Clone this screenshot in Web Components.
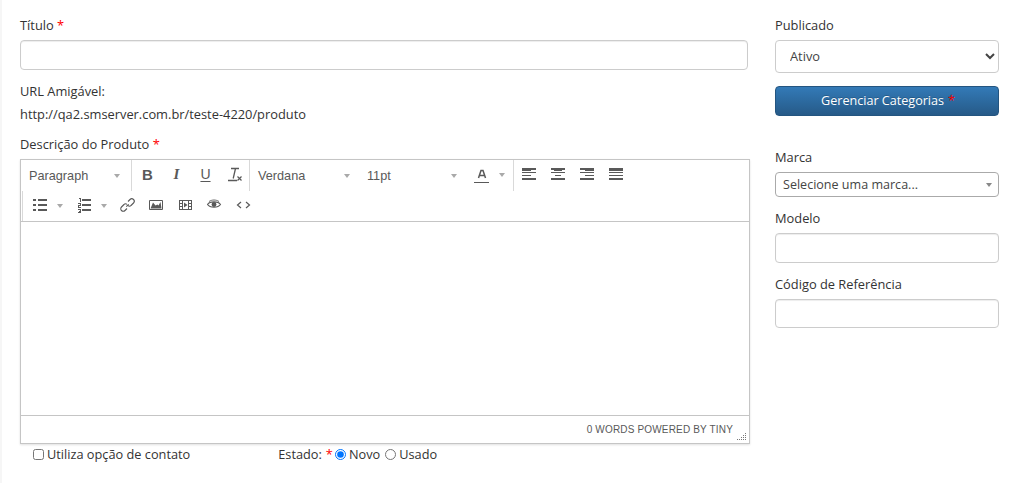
<!DOCTYPE html>
<html lang="pt-BR">
<head>
<meta charset="utf-8">
<title>Produto</title>
<style>
  html, body { margin: 0; background: #fff; }
  body { font: 12.85px "Open Sans", sans-serif; color: #333; }
</style>
</head>
<body>
<product-form></product-form>

<script>
// Label with optional red asterisk, field goes in the slot
class formField extends HTMLElement {
  constructor() {
    super();
    this.attachShadow({ mode: "open" });
    const req = this.hasAttribute("required") ? ' <span>*</span>' : "";
    this.shadowRoot.innerHTML = `
      <style>
        :host { display: flex; flex-direction: column; gap: 6px; }
        label { display: block; height: 18px; line-height: 18px; }
        span { color: #f00; }
      </style>
      <label>${this.getAttribute("label")}${req}</label>
      <slot></slot>`;
  }
}

class textInput extends HTMLElement {
  constructor() {
    super();
    this.attachShadow({ mode: "open" });
    const h = this.getAttribute("h") || 30;
    this.shadowRoot.innerHTML = `
      <style>
        :host { display: block; }
        input {
          display: block; box-sizing: border-box; width: 100%; height: ${h}px;
          border: 1px solid #ccc; border-radius: 4px; background: #fff; padding: 6px 12px;
          box-shadow: inset 0 1px 1px rgba(0,0,0,.075); outline: none;
          font: 13px "Open Sans", sans-serif;
        }
      </style>
      <input type="text">`;
  }
}

class selectBox extends HTMLElement {
  constructor() {
    super();
    this.attachShadow({ mode: "open" });
    this.shadowRoot.innerHTML = `
      <style>
        :host { display: block; }
        select {
          display: block; box-sizing: border-box; width: 100%; height: 33px;
          border: 1px solid #ccc; border-radius: 4px; background: #fff; padding: 0 10px 2px;
          font: 12.85px "Open Sans", sans-serif; color: #444; outline: none;
        }
      </style>
      <select><option>Ativo</option></select>`;
  }
}

// select2 style closed box
class brandSelect extends HTMLElement {
  constructor() {
    super();
    this.attachShadow({ mode: "open" });
    this.shadowRoot.innerHTML = `
      <style>
        :host {
          display: flex; align-items: center; justify-content: space-between; box-sizing: border-box;
          height: 25px; border: 1px solid #aaa; border-radius: 4px; background: #fff;
          padding: 0 6px 0 7px; color: #444; font-size: 12.55px;
        }
        i { width: 0; height: 0; border: 3.5px solid transparent; border-top: 4px solid #888; border-bottom: 0; }
      </style>
      <slot></slot><i></i>`;
  }
}

class primaryButton extends HTMLElement {
  constructor() {
    super();
    this.attachShadow({ mode: "open" });
    this.shadowRoot.innerHTML = `
      <style>
        :host {
          display: flex; align-items: center; justify-content: center; box-sizing: border-box;
          height: 30px; border: 1px solid #245580; border-radius: 4px; color: #fff; padding: 0 0 2px 2px;
          background: linear-gradient(to bottom, #337ab7 0, #265a88 100%);
          text-shadow: 0 -1px 0 rgba(0,0,0,.2); font-size: 12.6px;
        }
        span { color: #f00; margin-left: 4px; }
      </style>
      <slot></slot><span>*</span>`;
  }
}

// Editor pieces
class toolBtn extends HTMLElement {
  constructor() {
    super();
    this.attachShadow({ mode: "open" });
    const w = this.getAttribute("w") || 29;
    const arrow = this.hasAttribute("arrow") ? "<i></i>" : "";
    this.shadowRoot.innerHTML = `
      <style>
        :host {
          display: flex; align-items: center; box-sizing: border-box; width: ${w}px; height: 29px;
          justify-content: ${arrow ? "flex-start" : "center"}; color: #595959;
        }
        :host([arrow]) { padding-left: var(--pad, 8px); }
        i {
          flex: none; width: 0; height: 0; margin-left: var(--gap, 7px); margin-top: 1px;
          border: 3.5px solid transparent; border-top: 4px solid #a9a9a9; border-bottom: 0;
        }
        ::slotted(svg) { display: block; flex: none; }
      </style>
      <slot></slot>${arrow}`;
  }
}

class listBox extends HTMLElement {
  constructor() {
    super();
    this.attachShadow({ mode: "open" });
    this.shadowRoot.innerHTML = `
      <style>
        :host {
          display: flex; align-items: center; justify-content: space-between; box-sizing: border-box;
          width: ${this.getAttribute("w")}px; height: 31px; padding: 0 ${this.getAttribute("pr") || 7}px 0 8px;
          font: 12.7px "Liberation Sans", Arial, sans-serif; color: #595959;
        }
        i { width: 0; height: 0; border: 3.5px solid transparent; border-top: 4px solid #a9a9a9; border-bottom: 0; }
      </style>
      <slot></slot><i></i>`;
  }
}

class toolGroup extends HTMLElement {
  constructor() {
    super();
    this.attachShadow({ mode: "open" });
    this.shadowRoot.innerHTML = `
      <style>
        :host { display: flex; align-items: flex-start; box-sizing: border-box; height: 31px; }
        :host([line]) { border-left: 1px solid #d9d9d9; padding-left: 1px; }
        :host([flush]) { padding-left: 0; }
      </style>
      <slot></slot>`;
  }
}

class tinyEditor extends HTMLElement {
  constructor() {
    super();
    this.attachShadow({ mode: "open" });
    this.shadowRoot.innerHTML = `
      <style>
        :host {
          display: flex; flex-direction: column; box-sizing: border-box; height: 285px;
          border: 1px solid #c5c5c5; background: #fff; box-shadow: 0 1px 2px rgba(0,0,0,.12);
        }
        .bar { border-bottom: 1px solid #c5c5c5; height: 62px; box-sizing: border-box; }
        .row { display: flex; height: 31px; }
        .row + .row { height: 30px; padding-left: 1px; }
        .row + .row ::slotted(*) { height: 30px; }
        .area { flex: 1; }
        .status {
          display: flex; align-items: center; justify-content: flex-end; height: 28px; box-sizing: border-box;
          border-top: 1px solid #c5c5c5; padding-right: 16px;
          font: 10px "Liberation Sans", Arial, sans-serif; letter-spacing: .17px; color: #595959;
          position: relative;
        }
        .grip { position: absolute; right: 2px; bottom: 2px; }
      </style>
      <div class="bar">
        <div class="row"><slot name="row1"></slot></div>
        <div class="row"><slot name="row2"></slot></div>
      </div>
      <div class="area"></div>
      <div class="status">
        <span>0 WORDS POWERED BY TINY</span>
        <svg class="grip" width="10" height="10" viewBox="0 0 10 10" fill="#777" shape-rendering="crispEdges">
          <rect x="8" y="2" width="1" height="1"/>
          <rect x="8" y="4" width="1" height="1"/><rect x="6" y="4" width="1" height="1"/>
          <rect x="8" y="6" width="1" height="1"/><rect x="6" y="6" width="1" height="1"/><rect x="4" y="6" width="1" height="1"/>
          <rect x="8" y="8" width="1" height="1"/><rect x="6" y="8" width="1" height="1"/><rect x="4" y="8" width="1" height="1"/><rect x="2" y="8" width="1" height="1"/><rect x="0" y="8" width="1" height="1"/>
        </svg>
      </div>`;
  }
}

class productForm extends HTMLElement {
  constructor() {
    super();
    this.attachShadow({ mode: "open" });
    this.shadowRoot.appendChild(this.getTemplate().content.cloneNode(true));
  }

  alignIcon(rows) {
    // rows: [y, x, width, height] bars in a 14px wide icon
    return `<svg width="16" height="16" viewBox="0 0 16 16" fill="#595959" shape-rendering="crispEdges">${rows
      .map((r) => `<rect x="${r[1]}" y="${r[0]}" width="${r[2]}" height="${r[3]}"/>`)
      .join("")}</svg>`;
  }

  getTemplate() {
    const left = this.alignIcon([[1,0,14,2],[3,0,9,1],[5,0,14,1],[8,0,9,1],[11,0,14,2]]);
    const center = this.alignIcon([[1,0,14,2],[3,3,8,1],[5,0,14,1],[8,4,6,1],[11,0,14,2]]);
    const right = this.alignIcon([[1,0,14,2],[3,5,9,1],[5,0,14,1],[8,5,9,1],[11,0,14,2]]);
    const justify = this.alignIcon([[1,0,14,3],[5,0,14,1],[8,0,14,1],[11,0,14,2]]);
    const template = document.createElement("template");
    template.innerHTML = `
      <style>
        :host {
          display: flex; gap: 25px; box-sizing: border-box; width: 1014px; height: 483px;
          border-left: 2px solid #f6f6f6; padding: 16px 0 0 18px;
        }
        .main { width: 730px; display: flex; flex-direction: column; }
        .main > form-field:first-child text-input { width: 728px; }
        .line { height: 18px; line-height: 18px; }
        .url-label { margin-top: 12px; }
        .url { margin-top: 5px; }
        .desc { margin-top: 12px; }
        .foot { display: flex; align-items: center; height: 20px; padding-left: 13px; font-size: 12.75px; }
        .foot label { display: inline-flex; align-items: center; }
        .foot input { margin: 0 3px 0 0; width: 11px; height: 11px; }
        .foot .state { margin-left: 88px; display: flex; align-items: center; }
        .foot .state label + label { margin-left: 5px; }
        .foot b { color: #f00; font-weight: 400; margin: 0 2px 0 4px; }
        .side { width: 224px; display: flex; flex-direction: column; gap: 12px; }
        primary-button { margin-top: 1px; }
        .marca { margin-top: 20px; }
        .ic { color: #595959; line-height: 16px; }
        .b { font: 700 15px "Liberation Sans", Arial, sans-serif; }
        .i { font: italic 700 15px "Liberation Serif", serif; margin-top: -1px; }
        .u { font: 14px "Liberation Sans", Arial, sans-serif; text-decoration: underline; text-underline-offset: 2px; margin-top: -1px; }
      </style>
      <div class="main">
        <form-field label="Título" required><text-input></text-input></form-field>
        <div class="line url-label">URL Amigável:</div>
        <div class="line url">http://qa2.smserver.com.br/teste-4220/produto</div>
        <form-field class="desc" label="Descrição do Produto" required>
          <tiny-editor>
            <tool-group slot="row1">
              <list-box w="110" pr="11">Paragraph</list-box>
            </tool-group>
            <tool-group slot="row1" line>
              <tool-btn><span class="ic b">B</span></tool-btn>
              <tool-btn><span class="ic i">I</span></tool-btn>
              <tool-btn><span class="ic u">U</span></tool-btn>
              <tool-btn><svg width="16" height="16" viewBox="0 0 16 16" fill="none" stroke="#595959"><path d="M4 1.500h8M8.500 1.500 6.200 11.500M1 13.500h9" stroke-width="1.300"/><path d="m10.500 9.500 4 4M14.500 9.500l-4 4" stroke-width="1.200"/></svg></tool-btn>
            </tool-group>
            <tool-group slot="row1" line flush>
              <list-box w="109" pr="9">Verdana</list-box>
              <list-box w="107" pr="9">11pt</list-box>
              <tool-btn w="47" arrow style="--gap:9px"><svg width="16" height="16" viewBox="0 0 16 16" fill="none" stroke="#595959"><path d="M4.500 11 7 3.500h2L11.500 11M5.500 8.500h5" stroke-width="1.500"/><path d="M0 15.500h15" stroke-width="1"/></svg></tool-btn>
            </tool-group>
            <tool-group slot="row1" line>
              <tool-btn>${left}</tool-btn><tool-btn>${center}</tool-btn><tool-btn>${right}</tool-btn><tool-btn>${justify}</tool-btn>
            </tool-group>

            <tool-group slot="row2" line>
              <tool-btn w="45" arrow style="--gap:9px"><svg width="16" height="16" viewBox="0 0 16 16" fill="#595959" shape-rendering="crispEdges"><path d="M1 1h3v2H1zM6 1h9v2H6zM1 6h3v2H1zM6 6h9v2H6zM1 11h3v2H1zM6 11h9v2H6z"/></svg></tool-btn>
              <tool-btn w="44" arrow style="--gap:7.500px"><svg width="16" height="16" viewBox="0 0 16 16" fill="#595959" shape-rendering="crispEdges"><path d="M2 0h2v4H3V1H2zM1 5h3v3H2v1h2v1H1V7h2V6H1zM1 11h3v4H1v-1h2v-.5H2v-1h1V12H1zM5 1h9v2H5zM5 6h9v2H5zM5 11h9v2H5z"/></svg></tool-btn>
              <tool-btn><svg width="16" height="16" viewBox="0 0 16 16" fill="none" stroke="#595959" stroke-width="1.100"><path d="M6.300 8.700 8.700 6.300M8 3.500 10 1.500a2 2 0 0 1 3.500 3.500l-2.500 2.500a2 2 0 0 1-3 0M7 10.500 5 12.500a2 2 0 0 1-3.500-3.500l2.500-2.500a2 2 0 0 1 3 0"/></svg></tool-btn>
              <tool-btn><svg width="16" height="16" viewBox="0 0 16 16"><path d="M.5 2.500h13v9H.5z" fill="none" stroke="#595959"/><path d="M1.500 10.500 4 4.500l2.500 3 2-1 1 1 2-3.500 1 6.500z" fill="#595959"/></svg></tool-btn>
              <tool-btn><svg width="16" height="16" viewBox="0 0 16 16" fill="none" stroke="#595959" shape-rendering="crispEdges"><path d="M1.500 2.500h12v9h-12zM4.500 2.500v9M10.500 2.500v9M1.500 5.500h3M1.500 8.500h3M10.500 5.500h3M10.500 8.500h3"/><path d="M6 4.500 9.500 7 6 9.500z" fill="#595959" stroke="none" shape-rendering="auto"/></svg></tool-btn>
              <tool-btn><svg width="16" height="16" viewBox="0 0 16 16" fill="none" stroke="#595959"><path d="M.5 6.500C3 3 11 3 13.500 6.500 11 10 3 10 .5 6.500z" stroke-width="1.100"/><circle cx="7" cy="6.500" r="2.400" fill="#595959" stroke="none"/><path d="M2 3.500C5 1.500 9 1.500 12 3.500" stroke-width=".9"/></svg></tool-btn>
              <tool-btn><svg width="16" height="16" viewBox="0 0 16 16" fill="none" stroke="#595959" stroke-width="1.200"><path d="M5 4 1.500 7 5 10M10 4l3.500 3-3.500 3"/></svg></tool-btn>
            </tool-group>
          </tiny-editor>
        </form-field>
        <div class="foot">
          <label><input type="checkbox">Utiliza opção de contato</label>
          <div class="state">Estado:<b>*</b>
            <label><input type="radio" name="estado" checked>Novo</label>
            <label><input type="radio" name="estado">Usado</label>
          </div>
        </div>
      </div>
      <div class="side">
        <form-field label="Publicado"><select-box></select-box></form-field>
        <primary-button>Gerenciar Categorias</primary-button>
        <form-field class="marca" label="Marca"><brand-select>Selecione uma marca...</brand-select></form-field>
        <form-field label="Modelo"><text-input></text-input></form-field>
        <form-field label="Código de Referência"><text-input h="29"></text-input></form-field>
      </div>`;
    return template;
  }
}

customElements.define("form-field", formField);
customElements.define("text-input", textInput);
customElements.define("select-box", selectBox);
customElements.define("brand-select", brandSelect);
customElements.define("primary-button", primaryButton);
customElements.define("tool-btn", toolBtn);
customElements.define("list-box", listBox);
customElements.define("tool-group", toolGroup);
customElements.define("tiny-editor", tinyEditor);
customElements.define("product-form", productForm);
</script>
</body>
</html>
